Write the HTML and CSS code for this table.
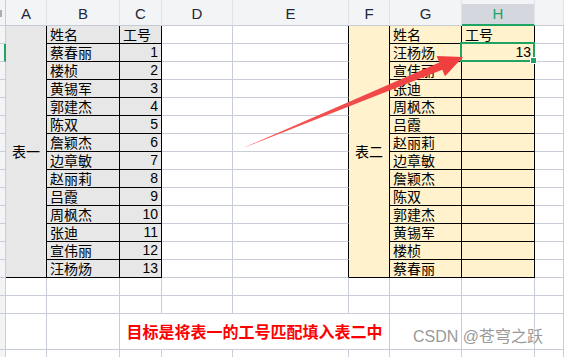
FILE: index.html
```html
<!DOCTYPE html>
<html lang="zh">
<head>
<meta charset="utf-8">
<title>Sheet</title>
<link rel="stylesheet" href="styles.css">
</head>
<body>
<div class="page">
  <div class="sheet">
    <!-- header row -->
    <div class="c rh corner"><span class="mark"></span></div>
    <div class="c hd">A</div>
    <div class="c hd">B</div>
    <div class="c hd">C</div>
    <div class="c hd">D</div>
    <div class="c hd">E</div>
    <div class="c hd">F</div>
    <div class="c hd">G</div>
    <div class="c hd hd-sel">H</div>
    <div class="c hd"></div>

    <!-- row 2 -->
    <div class="c rh"></div>
    <div class="c t1 merge mA">表一</div>
    <div class="c t1 bk">姓名</div>
    <div class="c t1 bk">工号</div>
    <div class="c"></div>
    <div class="c eb"></div>
    <div class="c t2 merge mF">表二</div>
    <div class="c t2 bk">姓名</div>
    <div class="c t2 bk">工号</div>
    <div class="c"></div>

    <!-- row 3 -->
    <div class="c rh rh-act"></div>
    <div class="c t1 bk">蔡春丽</div><div class="c t1 bk num">1</div>
    <div class="c"></div><div class="c eb"></div>
    <div class="c t2 bk">汪杨炀</div><div class="c t2 bk num sel">13<span class="handle"></span></div>
    <div class="c"></div>

    <div class="c rh"></div>
    <div class="c t1 bk">楼桢</div><div class="c t1 bk num">2</div>
    <div class="c"></div><div class="c eb"></div>
    <div class="c t2 bk">宣伟丽</div><div class="c t2 bk"></div>
    <div class="c"></div>

    <div class="c rh"></div>
    <div class="c t1 bk">黄锡军</div><div class="c t1 bk num">3</div>
    <div class="c"></div><div class="c eb"></div>
    <div class="c t2 bk">张迪</div><div class="c t2 bk"></div>
    <div class="c"></div>

    <div class="c rh"></div>
    <div class="c t1 bk">郭建杰</div><div class="c t1 bk num">4</div>
    <div class="c"></div><div class="c eb"></div>
    <div class="c t2 bk">周枫杰</div><div class="c t2 bk"></div>
    <div class="c"></div>

    <div class="c rh"></div>
    <div class="c t1 bk">陈双</div><div class="c t1 bk num">5</div>
    <div class="c"></div><div class="c eb"></div>
    <div class="c t2 bk">吕霞</div><div class="c t2 bk"></div>
    <div class="c"></div>

    <div class="c rh"></div>
    <div class="c t1 bk">詹颖杰</div><div class="c t1 bk num">6</div>
    <div class="c"></div><div class="c eb"></div>
    <div class="c t2 bk">赵丽莉</div><div class="c t2 bk"></div>
    <div class="c"></div>

    <div class="c rh"></div>
    <div class="c t1 bk">边章敏</div><div class="c t1 bk num">7</div>
    <div class="c"></div><div class="c eb"></div>
    <div class="c t2 bk">边章敏</div><div class="c t2 bk"></div>
    <div class="c"></div>

    <div class="c rh"></div>
    <div class="c t1 bk">赵丽莉</div><div class="c t1 bk num">8</div>
    <div class="c"></div><div class="c eb"></div>
    <div class="c t2 bk">詹颖杰</div><div class="c t2 bk"></div>
    <div class="c"></div>

    <div class="c rh"></div>
    <div class="c t1 bk">吕霞</div><div class="c t1 bk num">9</div>
    <div class="c"></div><div class="c eb"></div>
    <div class="c t2 bk">陈双</div><div class="c t2 bk"></div>
    <div class="c"></div>

    <div class="c rh"></div>
    <div class="c t1 bk">周枫杰</div><div class="c t1 bk num">10</div>
    <div class="c"></div><div class="c eb"></div>
    <div class="c t2 bk">郭建杰</div><div class="c t2 bk"></div>
    <div class="c"></div>

    <div class="c rh"></div>
    <div class="c t1 bk">张迪</div><div class="c t1 bk num">11</div>
    <div class="c"></div><div class="c eb"></div>
    <div class="c t2 bk">黄锡军</div><div class="c t2 bk"></div>
    <div class="c"></div>

    <div class="c rh"></div>
    <div class="c t1 bk">宣伟丽</div><div class="c t1 bk num">12</div>
    <div class="c"></div><div class="c eb"></div>
    <div class="c t2 bk">楼桢</div><div class="c t2 bk"></div>
    <div class="c"></div>

    <div class="c rh"></div>
    <div class="c t1 bk">汪杨炀</div><div class="c t1 bk num">13</div>
    <div class="c"></div><div class="c eb"></div>
    <div class="c t2 bk">蔡春丽</div><div class="c t2 bk"></div>
    <div class="c"></div>

    <!-- empty rows -->
    <div class="c rh"></div><div class="c"></div><div class="c"></div><div class="c"></div><div class="c"></div><div class="c"></div><div class="c"></div><div class="c"></div><div class="c"></div><div class="c"></div>
    <div class="c rh"></div><div class="c"></div><div class="c"></div><div class="c"></div><div class="c"></div><div class="c"></div><div class="c"></div><div class="c"></div><div class="c"></div><div class="c"></div>

    <!-- note row -->
    <div class="c rh"></div><div class="c"></div><div class="c"></div>
    <div class="c note">目标是将表一的工号匹配填入表二中</div>
    <div class="c"></div><div class="c"></div><div class="c"></div>

    <div class="c rh"></div><div class="c"></div><div class="c"></div><div class="c"></div><div class="c"></div><div class="c"></div><div class="c"></div><div class="c"></div><div class="c"></div><div class="c"></div>
  </div>

  <svg class="arrow" width="564" height="357" viewBox="0 0 564 357">
    <defs>
      <linearGradient id="ag" x1="243" y1="148" x2="463" y2="57" gradientUnits="userSpaceOnUse">
        <stop offset="0" stop-color="#f25a5a"/>
        <stop offset="1" stop-color="#f03c3c"/>
      </linearGradient>
    </defs>
    <polygon fill="url(#ag)" points="243,148 439.3,62.4 436.6,55.9 463,57 445,76.3 442.3,69.8"/>
  </svg>

  <div class="wm">CSDN @苍穹之跃</div>
</div>
</body>
</html>
```
FILE: styles.css
```css
html, body {
  margin: 0;
  padding: 0;
  background: #fff;
}
.page {
  position: relative;
  width: 564px;
  height: 357px;
  overflow: hidden;
  font-family: "Noto Sans CJK SC", "Liberation Sans", sans-serif;
}
.sheet {
  display: grid;
  grid-template-columns: 6px 41px 73px 42px 71px 116px 41px 72px 73px 1fr;
  grid-template-rows: 26px repeat(16, 18px) 36px 18px;
}
.c {
  box-sizing: border-box;
  border-right: 1px solid #c9cdd9;
  border-bottom: 1px solid #c9cdd9;
  font-size: 14px;
  line-height: 17px;
  color: #000;
  white-space: nowrap;
  padding: 0 3px;
}
.rh {
  background: #f3f4f6;
  padding: 0;
}
.mark {
  display: block;
  width: 2px;
  height: 7px;
  margin-top: 10px;
  background: #a9adb6;
}
.rh-act {
  border-right: 2px solid #21a366;
}
.hd {
  background: #f3f4f6;
  border-right-color: #dfe2e8;
  border-bottom-color: #c6cad4;
  font-family: "Liberation Sans", sans-serif;
  font-size: 15px;
  color: #22283a;
  text-align: center;
  line-height: 20px;
  padding-top: 4px;
}
.hd-sel {
  background: linear-gradient(#f3f4f6 0 4px, #d4d7de 4px);
  color: #21a366;
  border-bottom: 2px solid #21a366;
}
.t1 { background: #e7e7e7; }
.t2 { background: #fff2cc; }
.bk {
  border-right-color: #000;
  border-bottom-color: #000;
}
.eb { border-right-color: #000; }
.merge {
  grid-row: span 14;
  display: flex;
  align-items: center;
  justify-content: center;
  border-right-color: #000;
  border-bottom-color: #000;
  padding: 0;
}
.num {
  text-align: right;
  font-family: "Liberation Sans", sans-serif;
}
.sel {
  position: relative;
}
.sel::before {
  content: "";
  position: absolute;
  left: -2px;
  top: -2px;
  right: -1px;
  bottom: -1px;
  border: 2px solid #21a366;
}
.handle {
  position: absolute;
  right: -3px;
  bottom: -3px;
  width: 5px;
  height: 5px;
  background: #21a366;
  border: 1px solid #fff;
}
.note {
  grid-column: span 4;
  text-align: center;
  color: #ff0000;
  font-weight: 700;
  font-size: 16px;
  line-height: 35px;
}
.arrow {
  position: absolute;
  left: 0;
  top: 0;
}
.wm {
  position: absolute;
  left: 413px;
  top: 327px;
  font-family: "Liberation Sans", "Noto Sans CJK SC", sans-serif;
  font-size: 16px;
  line-height: 20px;
  color: #9a9a9a;
  text-shadow: 0 0 1px #fff;
}
```
